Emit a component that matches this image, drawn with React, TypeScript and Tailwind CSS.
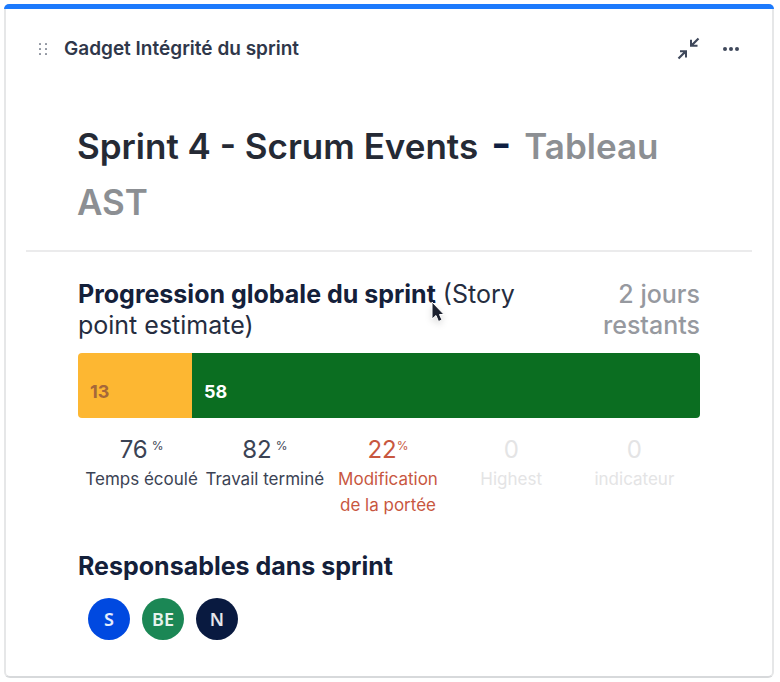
import React from 'react';

interface Stat {
  value: number;
  label: string;
  percent?: 'spaced' | 'tight';
  color: string;
}

interface Assignee {
  initials: string;
  color: string;
}

const stats: Stat[] = [
  { value: 76, label: 'Temps écoulé', percent: 'spaced', color: 'text-[#3b4354]' },
  { value: 82, label: 'Travail terminé', percent: 'spaced', color: 'text-[#3b4354]' },
  { value: 22, label: 'Modification de la portée', percent: 'tight', color: 'text-[#c8573f]' },
  { value: 0, label: 'Highest', color: 'text-[#e4e4e5]' },
  { value: 0, label: 'indicateur', color: 'text-[#e4e4e5]' },
];

const assignees: Assignee[] = [
  { initials: 'S', color: 'bg-[#0049e0]' },
  { initials: 'BE', color: 'bg-[#1b8755]' },
  { initials: 'N', color: 'bg-[#091a40]' },
];

const progress = [
  { points: 13, className: 'bg-[#fdb732] text-[#a5673a]' },
  { points: 58, className: 'bg-[#0b6e21] text-white' },
];

const DragHandle: React.FC = () => (
  <svg className="h-4 w-2.5" viewBox="0 0 10 16" fill="#9096a1" aria-hidden="true">
    {[3, 8, 13].map((y) => (
      <g key={y}>
        <rect x="1" y={y - 1} width="2" height="2" rx="0.5" />
        <rect x="7" y={y - 1} width="2" height="2" rx="0.5" />
      </g>
    ))}
  </svg>
);

const CollapseIcon: React.FC = () => (
  <svg className="size-6" viewBox="0 0 24 24" aria-hidden="true">
    <path d="M22.5 1.5 16 8M2.5 21.5 9 15" fill="none" stroke="#3f485b" strokeWidth="2.2" />
    <path d="M15 2.8V8.8H21.5M4 14.2H10V20.5" fill="none" stroke="#3f485b" strokeWidth="2" />
    <path d="M15 5V8.8H19ZM6 14.2H10V18.4Z" fill="#3f485b" />
  </svg>
);

const MoreIcon: React.FC = () => (
  <svg className="h-4 w-5" viewBox="0 0 20 16" fill="#3f485b" aria-hidden="true">
    <circle cx="5" cy="8" r="2" />
    <circle cx="11" cy="8" r="2" />
    <circle cx="17" cy="8" r="2" />
  </svg>
);

const Pointer: React.FC = () => (
  <svg className="absolute top-5 right-0 h-7 w-5 translate-x-3 drop-shadow-md" viewBox="0 0 20 28" aria-hidden="true">
    <path d="M4 3V20L8 16.5L10.5 22.5L14 21L11.5 15.5H16Z" fill="#1d2230" stroke="#fff" strokeWidth="1" />
  </svg>
);

const App: React.FC = () => {
  const total = progress.reduce((sum, part) => sum + part.points, 0);

  return (
    <div className="min-h-screen bg-white pt-1 pr-[6px] pb-1 pl-1 font-['Inter','Liberation_Sans',sans-serif]">
      <section className="rounded-md border-x-2 border-b-2 border-[#e6e7e8] border-b-[#d7d9db] bg-white">
        <div className="-mx-0.5 h-[5px] rounded-t-md bg-[#1d7afc]" />

        <header className="flex items-center gap-4 px-8 pt-6">
          <DragHandle />
          <h2 className="flex-1 text-[19px] leading-8 font-semibold text-[#2f374a]">Gadget Intégrité du sprint</h2>
          <div className="flex items-center gap-5">
            <button type="button" aria-label="Réduire">
              <CollapseIcon />
            </button>
            <button type="button" aria-label="Plus d'actions">
              <MoreIcon />
            </button>
          </div>
        </header>

        <div className="px-5 pt-[53px]">
          <h1 className="border-b-2 border-[#ebebec] px-[51px] pb-5 text-[35px] leading-14 font-semibold text-[#252a35]">
            Sprint 4 - Scrum Events <span className="mx-1 text-[44px] leading-10 text-[#0f1f42]">-</span>{' '}
            <span className="text-[#8c8f93]">Tableau AST</span>
          </h1>
        </div>

        <main className="px-[72px] pt-[27px] pb-9">
          <div className="flex justify-between text-[25px] leading-[31px]">
            <h3 className="max-w-[480px] text-[#252d40]">
              <span className="relative font-bold text-[#14203a]">
                Progression globale du sprint
                <Pointer />
              </span>{' '}
              (Story point estimate)
            </h3>
            <p className="w-28 text-right font-medium text-[#96999f]">2 jours restants</p>
          </div>

          <div className="mt-3 flex h-[65px] overflow-hidden rounded-sm">
            {progress.map((part) => (
              <div
                key={part.points}
                className={`flex items-end px-3 pb-3 text-lg leading-7 font-bold ${part.className}`}
                style={{ width: `${(part.points / total) * 100}%` }}
              >
                {part.points}
              </div>
            ))}
          </div>

          <dl className="mt-4 mr-1 ml-0.5 grid grid-cols-5">
            {stats.map((stat) => (
              <div key={stat.label} className={`flex flex-col-reverse justify-end text-center ${stat.color}`}>
                <dt className="text-[17px] leading-[26px]">{stat.label}</dt>
                <dd className="flex justify-center text-2xl leading-8">
                  {stat.value}
                  {stat.percent && (
                    <span className={`text-xs leading-6 ${stat.percent === 'spaced' ? 'pl-1' : ''}`}>%</span>
                  )}
                </dd>
              </div>
            ))}
          </dl>

          <h3 className="mt-8 text-[25px] leading-8 font-bold text-[#14203a]">Responsables dans sprint</h3>
          <ul className="mt-4 flex gap-3 pl-2.5">
            {assignees.map((person) => (
              <li
                key={person.initials}
                className={`flex size-[42px] items-center justify-center rounded-full font-['Noto_Sans',sans-serif] text-lg font-semibold text-white/90 ${person.color}`}
              >
                {person.initials}
              </li>
            ))}
          </ul>
        </main>
      </section>
    </div>
  );
};

export default App;
